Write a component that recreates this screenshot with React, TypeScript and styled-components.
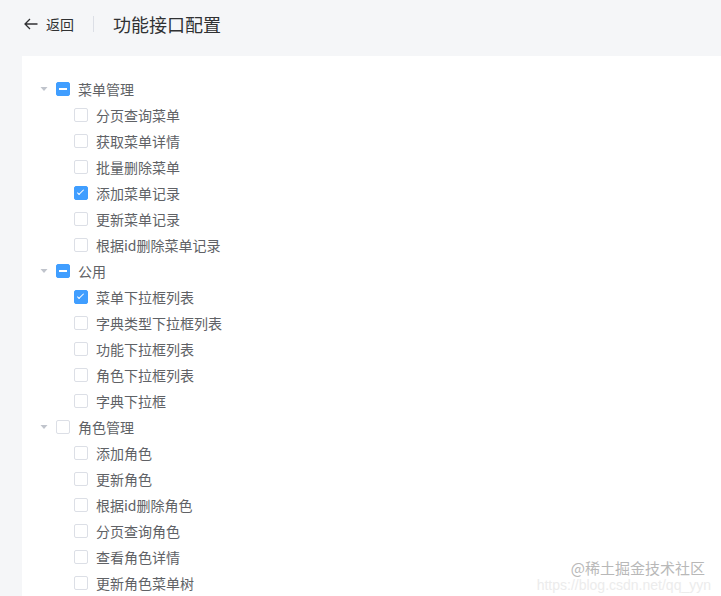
import React from "react";
import styled, { createGlobalStyle } from "styled-components";

const Global = createGlobalStyle`
  html, body { margin: 0; padding: 0; background: #f5f6f8; overflow: hidden; }
  body { font-family: "Noto Sans CJK SC", "Noto Sans", sans-serif; }
  * { box-sizing: border-box; }
`;

const Page = styled.div`
  position: relative;
  width: 721px;
  height: 596px;
  padding-left: 22px;
  background: #f5f6f8;
  overflow: hidden;
`;

const Header = styled.div`
  display: flex;
  align-items: center;
  height: 47px;
  color: #303133;
`;

const Back = styled.div`
  display: flex;
  align-items: center;
  font-size: 14px;
  color: #303133;
  gap: 7px;
  margin-left: 1px;
`;

const Divider = styled.div`
  width: 1px;
  height: 16px;
  background: #dcdfe6;
  margin: 0 19px;
`;

const Title = styled.div`
  font-size: 18px;
  color: #303133;
`;

const Card = styled.div`
  margin-top: 9px;
  background: #fff;
  width: 760px;
  height: 600px;
  padding: 20px 0 0 10px;
`;

const Row = styled.div<{ $level: number }>`
  display: flex;
  align-items: center;
  height: 26px;
  padding-left: ${(p) => p.$level * 18}px;
  font-size: 14px;
  color: #606266;
`;

const Caret = styled.span<{ $hidden?: boolean }>`
  width: 24px;
  height: 26px;
  display: flex;
  align-items: center;
  justify-content: center;
  visibility: ${(p) => (p.$hidden ? "hidden" : "visible")};
`;

const Box = styled.span<{ $on: boolean }>`
  position: relative;
  width: 14px;
  height: 14px;
  border-radius: 2px;
  border: 1px solid ${(p) => (p.$on ? "#409eff" : "#dcdfe6")};
  background: ${(p) => (p.$on ? "#409eff" : "#fff")};
  margin-right: 8px;
  flex-shrink: 0;
`;

const Check = styled.span`
  position: absolute;
  left: 4px;
  top: 1px;
  width: 3px;
  height: 7px;
  border: 1px solid #fff;
  border-left: 0;
  border-top: 0;
  transform: rotate(45deg);
`;

const Dash = styled.span`
  position: absolute;
  left: 2px;
  right: 2px;
  top: 5px;
  height: 2px;
  background: #fff;
`;

const Label = styled.span`
  line-height: 26px;
`;

const Watermark = styled.div`
  position: absolute;
  right: 16px;
  bottom: 18px;
  font-size: 15px;
  color: #b8b8b8;
  text-shadow: 0 0 1px #fff;
`;

const WatermarkUrl = styled.div`
  position: absolute;
  right: 10px;
  bottom: 3px;
  font-size: 14px;
  color: #ececec;
  font-family: "Liberation Sans", sans-serif;
`;

type State = "on" | "off" | "half";
type Node = { label: string; state: State; children?: Node[] };

const data: Node[] = [
  {
    label: "菜单管理",
    state: "half",
    children: [
      { label: "分页查询菜单", state: "off" },
      { label: "获取菜单详情", state: "off" },
      { label: "批量删除菜单", state: "off" },
      { label: "添加菜单记录", state: "on" },
      { label: "更新菜单记录", state: "off" },
      { label: "根据id删除菜单记录", state: "off" },
    ],
  },
  {
    label: "公用",
    state: "half",
    children: [
      { label: "菜单下拉框列表", state: "on" },
      { label: "字典类型下拉框列表", state: "off" },
      { label: "功能下拉框列表", state: "off" },
      { label: "角色下拉框列表", state: "off" },
      { label: "字典下拉框", state: "off" },
    ],
  },
  {
    label: "角色管理",
    state: "off",
    children: [
      { label: "添加角色", state: "off" },
      { label: "更新角色", state: "off" },
      { label: "根据id删除角色", state: "off" },
      { label: "分页查询角色", state: "off" },
      { label: "查看角色详情", state: "off" },
      { label: "更新角色菜单树", state: "off" },
    ],
  },
];

function Checkbox({ state }: { state: State }) {
  return (
    <Box $on={state !== "off"}>
      {state === "on" && <Check />}
      {state === "half" && <Dash />}
    </Box>
  );
}

function TreeNode({ node, level }: { node: Node; level: number }) {
  const hasKids = !!node.children?.length;
  return (
    <>
      <Row $level={level}>
        <Caret $hidden={!hasKids}>
          <svg width="8" height="6" viewBox="0 0 8 6">
            <path d="M0.5 1 L7.5 1 L4 5 Z" fill="#c0c4cc" />
          </svg>
        </Caret>
        <Checkbox state={node.state} />
        <Label>{node.label}</Label>
      </Row>
      {node.children?.map((c) => (
        <TreeNode key={c.label} node={c} level={level + 1} />
      ))}
    </>
  );
}

export default function App() {
  return (
    <Page>
      <Global />
      <Header>
        <Back>
          <svg width="16" height="16" viewBox="0 0 16 16">
            <path
              d="M14.5 8 H2 M7 3 L2 8 L7 13"
              fill="none"
              stroke="#303133"
              strokeWidth="1.3"
            />
          </svg>
          <span>返回</span>
        </Back>
        <Divider />
        <Title>功能接口配置</Title>
      </Header>
      <Card>
        {data.map((n) => (
          <TreeNode key={n.label} node={n} level={0} />
        ))}
      </Card>
      <Watermark>@稀土掘金技术社区</Watermark>
      <WatermarkUrl>https://blog.csdn.net/qq_yyn</WatermarkUrl>
    </Page>
  );
}
